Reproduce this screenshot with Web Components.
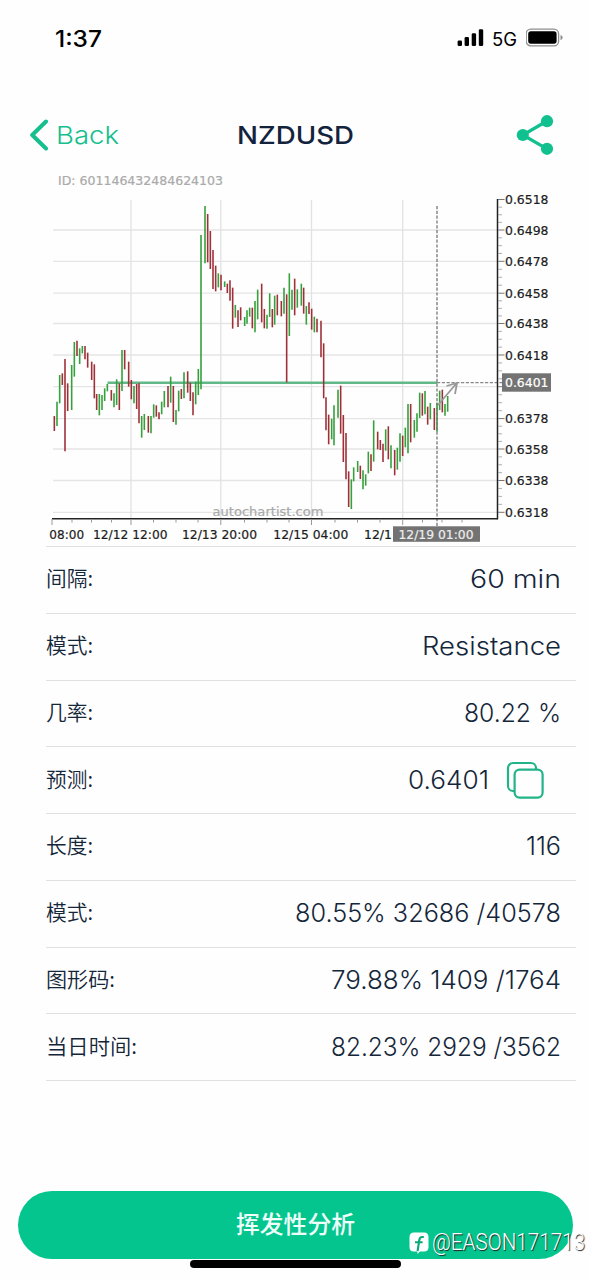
<!DOCTYPE html>
<html lang="zh">
<head>
<meta charset="utf-8">
<title>NZDUSD</title>
<style>
html,body{margin:0;background:#fefefe}
body{width:591px;height:1280px;overflow:hidden;font-family:Inter,"Noto Sans CJK SC",sans-serif;color:#14263a}
</style>
</head>
<body>
<app-screen></app-screen>
<script>
const define = (name, html, setup) => customElements.define(name, class extends HTMLElement {
  constructor() {
    super();
    this.attachShadow({ mode: 'open' }).innerHTML = html;
  }
  connectedCallback() { if (setup) setup.call(this, this.shadowRoot); }
});

// One line of text stretched to the width given in its "w" attribute.
define('fit-text', `<style>:host{display:inline-block;white-space:nowrap}span{display:inline-block;transform-origin:0 50%;white-space:nowrap}</style><span></span>`, function (root) {
  const s = root.querySelector('span');
  s.textContent = this.getAttribute('text');
  const w = +this.getAttribute('w');
  const natural = s.getBoundingClientRect().width;
  this.style.width = w + 'px';
  if (natural) s.style.transform = `scaleX(${w / natural})`;
});

define('status-bar', `<style>
:host{display:flex;height:76px;box-sizing:border-box;padding:0 27px 0 55px;align-items:center;color:#000}
.time{font-size:22.5px;font-weight:550}
.gap{flex:1}
.net{font-size:18.5px;font-weight:400;margin:1px 9px 0 8px}
svg{display:block}
</style>
<fit-text class="time" text="1:37" w="47"></fit-text><div class="gap"></div>
<svg width="27" height="18" viewBox="0 0 27 18"><rect x=".6" y="11.5" width="4.4" height="5.5" rx="1.3"/><rect x="7.6" y="8" width="4.4" height="9" rx="1.3"/><rect x="14.7" y="4.3" width="4.4" height="12.7" rx="1.3"/><rect x="21.8" y=".3" width="4.4" height="16.7" rx="1.3"/></svg>
<fit-text class="net" text="5G" w="25"></fit-text>
<svg width="38" height="20" viewBox="0 0 38 20"><rect x=".2" y="1.2" width="32.4" height="16.6" rx="4.6" fill="none" stroke="#8e8e8e" stroke-width="1.3"/><rect x="2.2" y="3.3" width="28.4" height="12.4" rx="2.6"/><path d="M34.5 7q2.2.7 2.2 2.6t-2.2 2.6z" fill="#8e8e8e"/></svg>`);

define('nav-bar', `<style>
:host{display:grid;grid-template-columns:208px 1fr 75px;height:94px;align-items:center;padding:24px 0 0 29px;box-sizing:border-box}
.back{display:flex;align-items:center;gap:7px;color:#16bf8d;font-size:24.5px;font-weight:300}
h1{margin:0;font-size:24.5px;font-weight:550;color:#13233d}
svg{display:block}
</style>
<div class="back"><svg width="20" height="32" viewBox="0 0 20 32"><path d="M17 2.5 3.2 16 17 29.5" fill="none" stroke="#16bf8d" stroke-width="4" stroke-linecap="round" stroke-linejoin="round"/></svg><fit-text text="Back" w="63"></fit-text></div>
<h1><fit-text text="NZDUSD" w="117"></fit-text></h1>
<svg width="38" height="42" viewBox="0 0 38 42"><path d="M31 7 6.8 21 31 34.8" fill="none" stroke="#10c18f" stroke-width="3.2"/><g fill="#10c18f"><circle cx="31" cy="7.2" r="6.1"/><circle cx="6.8" cy="21" r="6.1"/><circle cx="31" cy="34.8" r="6.1"/></g></svg>`);

// Candle ranges as "x top bottom colour", in thirds of a pixel from each group's origin.
const candles = [
  [40, 320, '43 288 333r,51 245 318g,59 165 250g,67 160 195r,75 117 394r,83 190 273r,95 135 270g,103 66 170g,111 62 108r,119 85 132g,127 78 100g,135 78 118r,143 98 143r,155 125 180r,163 133 235r,170 222 270r,178 222 286g,186 225 270g,194 205 243g,202 192 214g,214 210 242r,222 220 262g,230 178 255g,238 190 270r,246 90 213g,254 90 148r,266 125 200r,274 180 238r,282 198 250g,290 192 267r,297 190 310r,305 288 353g,313 282 330g,325 288 338r,333 288 340g,341 253 293g,349 256 290r,357 277 298r,365 245 283g,373 213 262g,384 198 262r,392 170 248g,400 198 306r,408 270 314g,416 212 274g,424 207 237r,432 157 235g,443 154 218r,451 188 243r,459 217 286r,467 185 253g,475 147 225g,483 -255 208g'],
  [190, 190, '45 48 220g,53 72 217r,61 123 237r,69 180 297r,77 227 304r,85 250 292g,93 254 301r,104 274 291g,112 281 309r,120 271 332r,128 293 416r,136 345 383g,144 361 411r,152 352 391r,164 381 408g,171 361 401g,179 353 380g,187 353 415r,195 333 427g,203 299 388g,215 281 397r,223 357 415r,231 374 416g,239 310 381g,247 357 412r,254 317 404g,262 314 376r,274 333 379r,282 293 371g,290 313 577r,298 250 438g,306 299 359g,314 266 376r,322 298 353g,334 281 347g,341 293 371r,349 348 404g,357 337 372r,365 356 419r,373 380 427g,381 386 427r,393 392 502r,401 460 625r'],
  [310, 260, '48 412 511r,56 464 553r,65 476 538g,72 436 556g,84 389 473g,92 377 521r,100 465 606r,108 519 658r,116 634 741r,124 658 747g,131 622 664g,143 603 636g,151 617 657r,159 631 688g,167 643 677g,175 575 640g,183 583 633r,191 481 605g,203 515 568r,211 540 570r,219 551 606r,227 508 572g,235 499 598r,243 556 625g,254 570 646r,262 563 629g,270 520 605g,278 527 588r,286 503 562g,294 432 580g,302 432 547r,313 480 533g,321 460 515g,329 398 474g,337 400 467r,345 393 463g,353 440 494r,361 429 478g,373 444 510r,381 428 515g,389 392 450g,397 389 457r,405 432 467g,413 408 455g']
];

define('price-chart', `<style>:host{display:block;height:376px}svg{display:block}text{font-family:"DejaVu Sans",sans-serif;font-size:12.5px;fill:#1c1c1c;stroke:#1c1c1c;stroke-width:.2px}</style>
<svg width="591" height="376" viewBox="0 170 591 376"></svg>`, function (root) {
  const line = (x1, y1, x2, y2, c, w, extra = '') => `<line x1="${x1}" y1="${y1}" x2="${x2}" y2="${y2}" stroke="${c}" stroke-width="${w}" ${extra}/>`;
  const text = (x, y, w, t, style = '') => `<text x="${x}" y="${y}" textLength="${w}" lengthAdjust="spacingAndGlyphs" style="${style}">${t}</text>`;
  const ys = [199.5, 230, 261.3, 293.2, 323.5, 355, 386.7, 418.6, 449, 480.5, 512.3];
  const names = ['0.6518', '0.6498', '0.6478', '0.6458', '0.6438', '0.6418', '', '0.6378', '0.6358', '0.6338', '0.6318'];
  let h = text(58, 185.3, 165, 'ID: 601146432484624103', 'fill:#aaa;stroke:#aaa;font-size:12px');
  ys.slice(1).forEach(y => h += line(53, y, 497, y, '#e5e5e5', 1.3));
  [131, 220.8, 311.5, 402.7].forEach(x => h += line(x, 200, x, 518, '#e2e2e2', 1.3));
  h += text(212.5, 515.5, 111, 'autochartist.com', 'fill:#aaa;stroke:#aaa;font-size:12px');
  h += line(107.5, 382.7, 437, 382.7, '#62b888', 2.6);
  for (const [ox, oy, data] of candles)
    for (const item of data.split(',')) {
      const [x, a, b] = item.slice(0, -1).split(' ').map(Number);
      h += line(ox + x / 3, oy + a / 3, ox + x / 3, oy + b / 3, item.endsWith('r') ? '#a03038' : '#35a03c', 1.6);
    }
  h += line(437, 206, 437, 526, '#777', 1.3, 'stroke-dasharray="3.2 1.6"');
  h += line(437, 382.7, 503, 382.7, '#888', 1.2, 'stroke-dasharray="3.2 1.6"');
  h += '<path d="M438 405 456 384M446.5 386 457 383 455 394" fill="none" stroke="#999" stroke-width="1.8"/>';
  h += line(497.5, 199, 497.5, 519.2, '#222', 1.5) + line(52, 518.7, 498, 518.7, '#222', 1.6);
  ys.forEach((y, i) => {
    h += line(498, y, 504.5, y, '#777', 1);
    if (i < 10) for (let k = 1; k < 4; k++) { const m = y + (ys[i + 1] - y) * k / 4; h += line(498, m, 502, m, '#999', .8); }
    if (names[i]) h += text(505, y + 4.6, 43.5, names[i]);
  });
  h += '<rect x="502" y="373.3" width="49" height="18.4" fill="#737373"/>' + text(505, 387.3, 43.5, '0.6401', 'fill:#fff;stroke:#fff');
  [52, 131, 220.8, 311.5, 402.7].forEach(x => h += line(x, 519, x, 525, '#999', 1));
  [72, 91.5, 111.5, 153.5, 176, 198, 244.5, 267, 289, 335, 357.5, 380, 422.5, 442, 462].forEach(x => h += line(x, 519, x, 522.5, '#999', 1));
  h += text(49.3, 539, 34.8, '08:00') + text(93, 539, 74.5, '12/12 12:00') + text(182, 539, 75, '12/13 20:00') + text(273.3, 539, 75, '12/15 04:00') + text(364, 539, 28, '12/1');
  h += '<rect x="393" y="526.3" width="87" height="15.5" fill="#737373"/>' + text(398.5, 539, 75, '12/19 01:00', 'fill:#eee;stroke:#eee');
  root.querySelector('svg').innerHTML = h;
});

define('copy-icon', `<style>:host{display:block;margin:1px 17px 0 17px}svg{display:block}</style>
<svg width="38" height="38" viewBox="0 0 38 38" fill="none" stroke="#22b388" stroke-width="2.2"><rect x="8.6" y="8.6" width="28" height="28" rx="5"/><path d="M8.6 30H7a5 5 0 0 1-5-5V7a5 5 0 0 1 5-5h18a5 5 0 0 1 5 5v1.6"/></svg>`);

define('detail-row', `<style>
:host{display:flex;height:66.75px;box-sizing:border-box;border-bottom:1px solid #e0e0e2;align-items:center;padding:0 15px 2px 0;justify-content:space-between}
.l{font-family:"Noto Sans CJK SC",sans-serif;font-size:21px;font-weight:350;line-height:30px;margin-top:-3px}
.v{display:flex;align-items:center;font-size:25.5px;font-weight:300}
</style><div class="l"><slot name="label"></slot></div><div class="v"><slot></slot></div>`);

const rows = [['间隔:', 47, '60 min', 91], ['模式:', 47, 'Resistance', 139], ['几率:', 47, '80.22 %', 97], ['预测:', 47, '0.6401', 81, 1], ['长度:', 47, '116', 35], ['模式:', 47, '80.55% 32686 /40578', 266], ['图形码:', 69, '79.88% 1409 /1764', 230], ['当日时间:', 91, '82.23% 2929 /3562', 230]];

define('detail-list', `<style>:host{display:block;margin:0 15px 0 46px;border-top:1px solid #e0e0e2}</style>${rows.map(([l, lw, v, vw, copy]) => `<detail-row><fit-text slot="label" text="${l}" w="${lw}"></fit-text><fit-text text="${v}" w="${vw}"></fit-text>${copy ? '<copy-icon></copy-icon>' : ''}</detail-row>`).join('')}`);

define('action-button', `<style>:host{display:flex;margin:110px 18px 0;height:68px;padding-bottom:4px;box-sizing:border-box;border-radius:34px;background:#05c58f;color:#effff9;align-items:center;justify-content:center;font:500 23.8px/34px "Noto Sans CJK SC",sans-serif}</style><slot></slot>`);

define('home-indicator', `<style>:host{display:block;width:211px;height:8px;border-radius:4px;background:#000;margin:1px auto 0 190px}</style>`);

define('user-mark', `<style>:host{position:absolute;left:409px;top:1227px;display:flex;align-items:center;gap:3px;color:#fff;font:300 23.2px/30px Roboto,sans-serif;text-shadow:1px 1px 1px #222}svg{display:block;margin-top:2px}</style>
<svg width="20" height="22" viewBox="0 0 20 22"><path d="M5 .5h10Q19.5.5 19.5 5v10q0 4.5-4.5 4.5h-4L8.5 22v-2.5H5Q.5 19.5.5 15V5Q.5.5 5 .5Z" fill="#fff"/><path d="M14.8 5h-1.6q-2.5 0-2.9 3L8.6 19M6 10.3h7.6" fill="none" stroke="#0aa87c" stroke-width="2.1"/></svg><fit-text text="@EASON171713" w="153"></fit-text>`);

define('app-screen', `<style>:host{display:block;position:relative;width:591px;height:1280px;overflow:hidden}</style>
<status-bar></status-bar><nav-bar></nav-bar><price-chart></price-chart><detail-list></detail-list>
<action-button>挥发性分析</action-button><home-indicator></home-indicator><user-mark></user-mark>`);
</script>
</body>
</html>
